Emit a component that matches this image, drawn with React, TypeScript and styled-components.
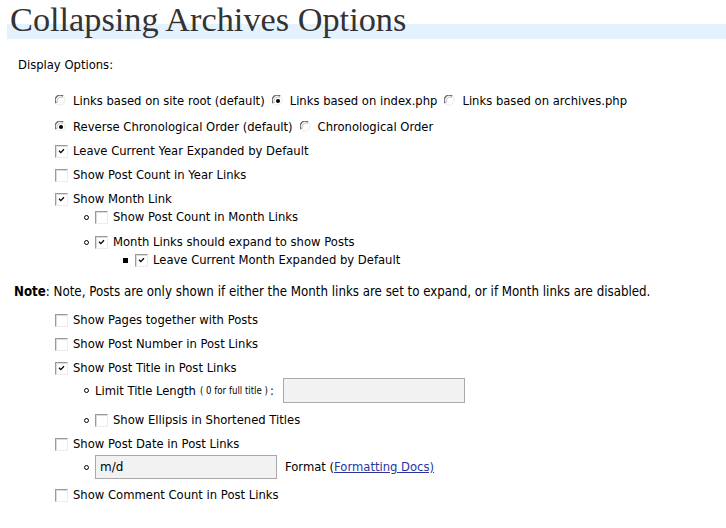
import React from 'react';
import styled, { createGlobalStyle } from 'styled-components';

const GlobalStyle = createGlobalStyle`
  html, body {
    margin: 0;
    padding: 0;
    background: #fff;
  }
  body {
    font-family: "DejaVu Sans", Verdana, sans-serif;
    font-size: 11.6px;
    color: #000;
  }
`;

const Page = styled.div`
  width: 726px;
  height: 528px;
  overflow: hidden;
  position: relative;
`;

const TitleWrap = styled.div`
  position: relative;
  margin-left: 7px;
  height: 39px;
`;

const TitleBand = styled.div`
  position: absolute;
  left: 0;
  right: 0;
  top: 24px;
  height: 15px;
  background: #e4f2fd;
`;

const Title = styled.h2`
  position: relative;
  margin: 0;
  padding-left: 3px;
  font-family: "Liberation Serif", "DejaVu Serif", serif;
  font-weight: normal;
  font-size: 34.3px;
  line-height: 38px;
  color: #333;
`;

const Row = styled.div<{ $top: number; $indent: number; $h?: number }>`
  display: flex;
  align-items: center;
  height: ${(p) => p.$h ?? 18}px;
  margin-top: ${(p) => p.$top}px;
  padding-left: ${(p) => p.$indent}px;
  white-space: nowrap;
`;

const Label = styled.span<{ $wide?: boolean }>`
  margin-left: ${(p) => (p.$wide ? 6 : 5)}px;
  margin-right: ${(p) => (p.$wide ? 7 : 4)}px;
`;

const NoteText = styled.span`
  font-family: "DejaVu Sans Condensed", "DejaVu Sans", sans-serif;
  font-stretch: condensed;
  font-size: 13.2px;
`;

const Small = styled.span`
  font-family: "DejaVu Sans Condensed", "DejaVu Sans", sans-serif;
  font-stretch: condensed;
  font-size: 9.6px;
  margin: 0 2px 0 4px;
`;

const Colon = styled.span`
  margin-right: 9px;
`;

const Box = styled.span`
  display: inline-flex;
  align-items: center;
  justify-content: center;
  box-sizing: border-box;
  width: 13px;
  height: 13px;
  flex: none;
  background: #fff;
  border-top: 1px solid #9a9a9a;
  border-left: 1px solid #9a9a9a;
  border-right: 1px solid #ececec;
  border-bottom: 1px solid #ececec;
  box-shadow: inset 1px 1px 0 #dcdcdc;
`;

const Circle = styled.span`
  display: inline-block;
  box-sizing: border-box;
  width: 5px;
  height: 5px;
  border: 1px solid #000;
  border-radius: 50%;
  margin-right: 6px;
  flex: none;
`;

const Square = styled.span`
  display: inline-block;
  width: 5px;
  height: 5px;
  background: #000;
  margin-right: 7px;
  flex: none;
`;

const TextInput = styled.input<{ $w: number; $h: number }>`
  box-sizing: border-box;
  width: ${(p) => p.$w}px;
  height: ${(p) => p.$h}px;
  border: 1px solid #aaa;
  background: #f2f2f2;
  font-family: "DejaVu Sans", sans-serif;
  font-size: 12px;
  padding: 0 4px;
  color: #000;
  outline: none;
`;

const FormatText = styled.span`
  margin-left: 8px;
`;

const DocLink = styled.a`
  color: #2a35a0;
  text-decoration: underline;
`;

function Check({ on }: { on?: boolean }) {
  return (
    <Box>
      {on && (
        <svg width="7" height="6" viewBox="0 0 7 6">
          <path d="M1 2.8 L2.8 4.6 L6 1.2" fill="none" stroke="#000" strokeWidth="1.3" />
        </svg>
      )}
    </Box>
  );
}

function Radio({ on }: { on?: boolean }) {
  return (
    <svg width="12" height="12" viewBox="0 0 12 12" style={{ flex: 'none' }}>
      <circle cx="6" cy="6" r="5.5" fill="#fff" />
      <path d="M1.2 8.2 A5 5 0 0 1 8.2 1.2" fill="none" stroke="#6e6e6e" strokeWidth="1.4" />
      <path d="M2.4 7.6 A3.9 3.9 0 0 1 7.6 2.4" fill="none" stroke="#c0c0c0" strokeWidth="1" />
      <path d="M8.6 1.4 A5 5 0 0 1 1.4 8.6" fill="none" stroke="#eeeeee" strokeWidth="1.2" />
      {on && <circle cx="6" cy="6" r="2" fill="#000" />}
    </svg>
  );
}

export default function App() {
  return (
    <Page>
      <GlobalStyle />
      <TitleWrap>
        <TitleBand />
        <Title>Collapsing Archives Options</Title>
      </TitleWrap>

      <Row $top={17} $indent={18}>Display Options:</Row>

      <Row $top={18} $indent={55}>
        <Radio />
        <Label $wide>Links based on site root (default)</Label>
        <Radio on />
        <Label $wide>Links based on index.php</Label>
        <Radio />
        <Label $wide>Links based on archives.php</Label>
      </Row>
      <Row $top={8} $indent={55}>
        <Radio on />
        <Label $wide>Reverse Chronological Order (default)</Label>
        <Radio />
        <Label $wide>Chronological Order</Label>
      </Row>
      <Row $top={6} $indent={55}>
        <Check on />
        <Label>Leave Current Year Expanded by Default</Label>
      </Row>
      <Row $top={6} $indent={55}>
        <Check />
        <Label>Show Post Count in Year Links</Label>
      </Row>
      <Row $top={6} $indent={55}>
        <Check on />
        <Label>Show Month Link</Label>
      </Row>
      <Row $top={0} $indent={84}>
        <Circle />
        <Check />
        <Label>Show Post Count in Month Links</Label>
      </Row>
      <Row $top={7} $indent={84}>
        <Circle />
        <Check on />
        <Label>Month Links should expand to show Posts</Label>
      </Row>
      <Row $top={0} $indent={123}>
        <Square />
        <Check on />
        <Label>Leave Current Month Expanded by Default</Label>
      </Row>

      <Row $top={13} $indent={14}>
        <NoteText>
          <b>Note</b>: Note, Posts are only shown if either the Month links are set to expand, or if Month links are disabled.
        </NoteText>
      </Row>

      <Row $top={11} $indent={55}>
        <Check />
        <Label>Show Pages together with Posts</Label>
      </Row>
      <Row $top={6} $indent={55}>
        <Check />
        <Label>Show Post Number in Post Links</Label>
      </Row>
      <Row $top={6} $indent={55}>
        <Check on />
        <Label>Show Post Title in Post Links</Label>
      </Row>
      <Row $top={1} $indent={84} $h={25}>
        <Circle />
        <span>Limit Title Length</span>
        <Small>( 0 for full title )</Small>
        <Colon>:</Colon>
        <TextInput $w={182} $h={25} defaultValue="" />
      </Row>
      <Row $top={8} $indent={84}>
        <Circle />
        <Check />
        <Label>Show Ellipsis in Shortened Titles</Label>
      </Row>
      <Row $top={6} $indent={55}>
        <Check />
        <Label>Show Post Date in Post Links</Label>
      </Row>
      <Row $top={2} $indent={84} $h={24}>
        <Circle />
        <TextInput $w={182} $h={24} defaultValue="m/d" />
        <FormatText>
          Format (<DocLink href="#">Formatting Docs)</DocLink>
        </FormatText>
      </Row>
      <Row $top={7} $indent={55}>
        <Check />
        <Label>Show Comment Count in Post Links</Label>
      </Row>
    </Page>
  );
}
